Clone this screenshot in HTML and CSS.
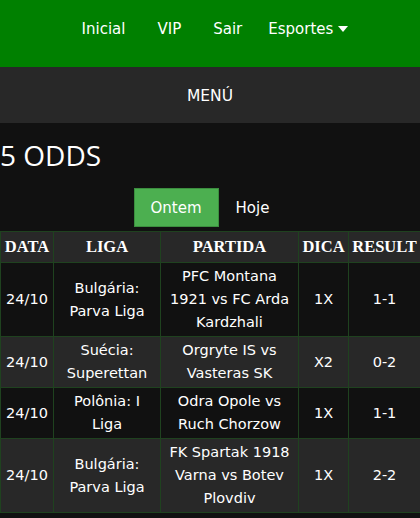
FILE: index.html
```html
<!DOCTYPE html>
<html lang="pt">
<head>
<meta charset="utf-8">
<title>5 ODDS</title>
<link rel="stylesheet" href="styles.css">
</head>
<body>
<nav class="topnav">
  <a class="nav-link" href="#">Inicial</a>
  <a class="nav-link" href="#">VIP</a>
  <a class="nav-link" href="#">Sair</a>
  <a class="nav-link nav-drop" href="#">Esportes<svg class="caret" width="10" height="6" viewBox="0 0 10 6"><path d="M0 0H10L5 6Z" fill="#fff"/></svg></a>
</nav>
<div class="menubar">MENÚ</div>
<h1 class="title">5 ODDS</h1>
<div class="tabs">
  <button class="tab active">Ontem</button>
  <button class="tab">Hoje</button>
</div>
<table class="odds">
  <colgroup>
    <col class="c-data"><col class="c-liga"><col class="c-partida"><col class="c-dica"><col class="c-result">
  </colgroup>
  <thead>
    <tr><th>DATA</th><th>LIGA</th><th>PARTIDA</th><th>DICA</th><th>RESULT</th></tr>
  </thead>
  <tbody>
    <tr><td>24/10</td><td>Bulgária: Parva Liga</td><td>PFC Montana 1921 vs FC Arda Kardzhali</td><td>1X</td><td>1-1</td></tr>
    <tr><td>24/10</td><td>Suécia: Superettan</td><td>Orgryte IS vs Vasteras SK</td><td>X2</td><td>0-2</td></tr>
    <tr><td>24/10</td><td>Polônia: I Liga</td><td>Odra Opole vs Ruch Chorzow</td><td>1X</td><td>1-1</td></tr>
    <tr><td>24/10</td><td>Bulgária: Parva Liga</td><td>FK Spartak 1918 Varna vs Botev Plovdiv</td><td>1X</td><td>2-2</td></tr>
  </tbody>
</table>
</body>
</html>
```
FILE: styles.css
```css
html, body {
  margin: 0;
  padding: 0;
  background: #111111;
  color: #ffffff;
  font-family: "DejaVu Sans", Verdana, sans-serif;
}
.topnav {
  height: 67px;
  background: #008000;
  display: flex;
  justify-content: center;
  align-items: flex-start;
  padding-top: 19px;
  padding-left: 4px;
  box-sizing: border-box;
}
.nav-link {
  color: #fff;
  text-decoration: none;
  font-size: 15px;
  line-height: 20px;
  padding: 0 16px;
}
.nav-drop {
  padding: 0 10px;
  display: flex;
  align-items: center;
}
.caret {
  margin-left: 5px;
}
.menubar {
  height: 56px;
  background: #282828;
  display: flex;
  align-items: center;
  justify-content: center;
  font-size: 15.5px;
  padding-top: 2px;
  box-sizing: border-box;
}
.title {
  margin: 13px 0 0;
  font-family: "Open Sans", "Noto Sans", sans-serif;
  font-weight: 400;
  font-size: 28px;
  line-height: 38px;
}
.tabs {
  display: flex;
  justify-content: center;
  margin-top: 14px;
}
.tab {
  font-family: "DejaVu Sans", Verdana, sans-serif;
  font-size: 15px;
  color: #fff;
  background: transparent;
  border: 1px solid transparent;
  height: 39px;
  padding: 0 16px;
  margin: 0;
  cursor: pointer;
}
.tab.active {
  background: #4caf50;
  border-color: #3c8e3f;
}
.odds {
  margin-top: 4px;
  width: 420px;
  table-layout: fixed;
  border-collapse: collapse;
  font-size: 14.5px;
}
.c-data { width: 53px; }
.c-liga { width: 107px; }
.c-partida { width: 138px; }
.c-dica { width: 50px; }
.c-result { width: 72px; }
.odds th, .odds td {
  border: 1px solid #1f421f;
  text-align: center;
  vertical-align: middle;
}
.odds th {
  background: #282828;
  font-family: "Liberation Serif", "Times New Roman", serif;
  font-weight: bold;
  font-size: 16.5px;
  line-height: 19px;
  padding: 5px 0 6px;
}
.odds td {
  line-height: 23px;
  padding: 2px 4px;
}
.odds tbody tr:nth-child(odd) td { background: #111111; }
.odds tbody tr:nth-child(even) td { background: #282828; }
```
